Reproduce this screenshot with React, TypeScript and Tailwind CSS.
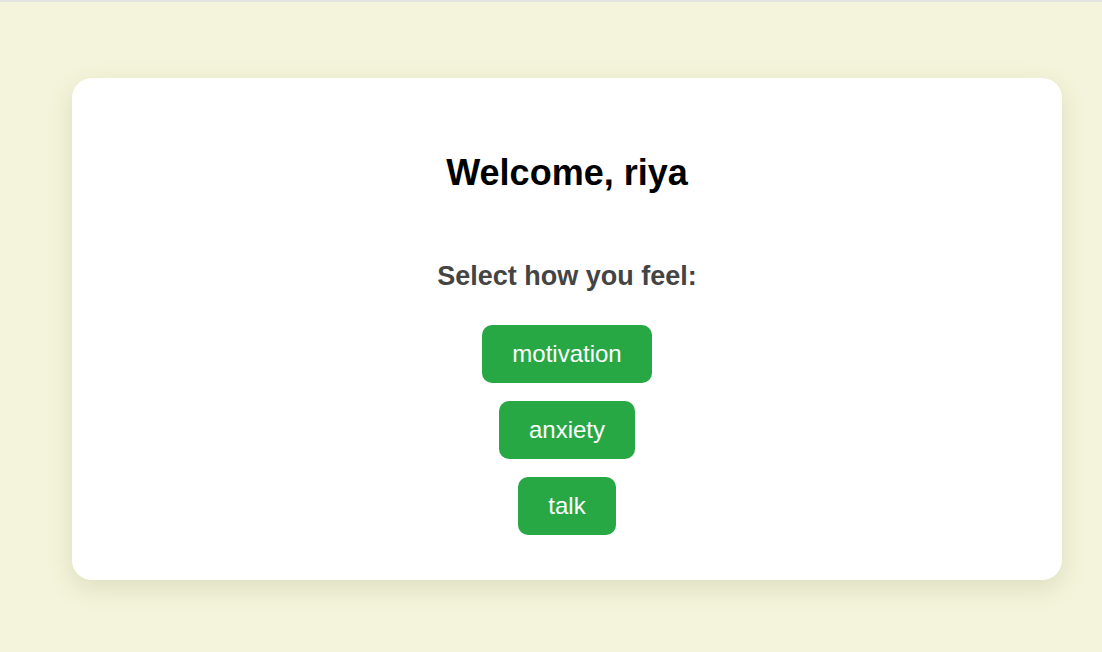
export default function App() {
  const moods = ["motivation", "anxiety", "talk"];

  return (
    <div
      className="min-h-[652px] w-full border-t-2 border-[#e3e3e3] bg-[#f4f4dc] pt-[76px] pl-[72px] pr-[40px]"
      style={{ fontFamily: '"Liberation Sans", Arial, sans-serif' }}
    >
      <div className="flex flex-col items-center rounded-[20px] bg-white pt-[74px] pb-[45px] shadow-[0_8px_24px_rgba(120,120,60,0.18)]">
        <h1 className="text-[36px] leading-[41px] font-bold text-black">
          Welcome, riya
        </h1>
        <h2 className="mt-[68px] text-[27px] leading-[31px] font-bold text-[#444444]">
          Select how you feel:
        </h2>
        <div className="mt-[33px] flex flex-col items-center gap-[18px]">
          {moods.map((mood) => (
            <button
              key={mood}
              className="rounded-[10px] bg-[#28a745] px-[30px] py-[15px] text-[24px] leading-[28px] text-white"
            >
              {mood}
            </button>
          ))}
        </div>
      </div>
    </div>
  );
}
